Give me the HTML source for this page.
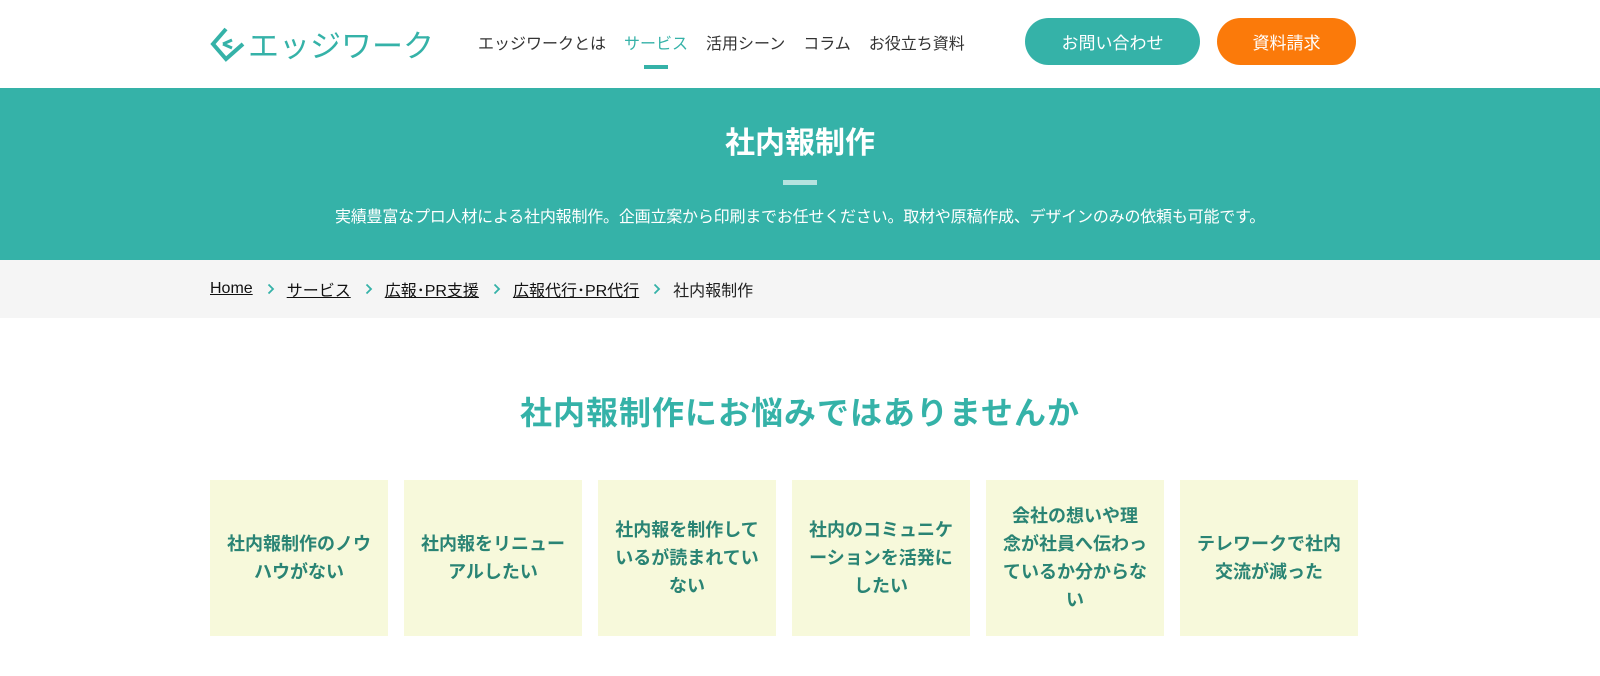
<!DOCTYPE html>
<html><head><meta charset="utf-8"><style>
*{margin:0;padding:0;box-sizing:border-box}
body{width:1600px;height:676px;overflow:hidden;background:#fff;font-family:"Liberation Sans","Noto Sans CJK JP",sans-serif;color:#333}
header{height:88px;position:relative}
.logo{position:absolute;left:210px;top:21px;display:flex;align-items:center;color:#35b2a8;font-size:31px}
nav{position:absolute;left:478px;top:30px;font-size:16px;display:flex;gap:18px;color:#333}
nav span.on{color:#35b2a8;position:relative}
nav span.on:after{content:"";position:absolute;left:20px;top:35px;width:24px;height:4px;background:#35b2a8}
.btn{position:absolute;top:18px;height:47px;border-radius:24px;color:#fff;font-size:17px;display:flex;align-items:center;justify-content:center}
.hero{background:#35b2a8;height:172px;color:#fff;text-align:center;position:relative}
.hero h1{font-size:30px;padding-top:36px;font-weight:bold;line-height:40px}
.hero .bar{width:34px;height:5px;background:#b5e3df;margin:16px auto 0}
.hero p{font-size:16px;margin-top:18px;letter-spacing:-0.2px}
.bc{background:#f5f5f5;height:58px;font-size:16px;display:flex;align-items:center;padding-left:210px;color:#222}
.bc a{color:#111;text-decoration:underline}
.bc svg{margin:0 12px 0 14px}
h2{text-align:center;color:#35b2a8;font-size:32px;margin-top:70px;font-weight:bold;letter-spacing:1px}
.cards{position:absolute;top:480px;left:210px;display:flex;gap:16px}
.card{width:178px;height:156px;background:#f7f9db;color:#2a8474;font-weight:bold;font-size:18px;line-height:28px;display:flex;align-items:center;justify-content:center;text-align:center;white-space:nowrap}
</style></head><body>
<header>
<div class="logo"><svg width="36" height="36" viewBox="0 0 36 36" fill="none" stroke="#35b2a8" stroke-width="4"><path d="M16 3 L3 18 L16 33 L33 18"/><path d="M13 18 L22 14 M13 18 L22 22" stroke-width="3"/></svg><span style="margin-left:2px">エッジワーク</span></div>
<nav><span>エッジワークとは</span><span class="on">サービス</span><span>活用シーン</span><span>コラム</span><span>お役立ち資料</span></nav>
<div class="btn" style="left:1025px;width:175px;background:#35b2a8">お問い合わせ</div>
<div class="btn" style="left:1217px;width:139px;background:#fb7a0a">資料請求</div>
</header>
<div class="hero"><h1>社内報制作</h1><div class="bar"></div><p>実績豊富なプロ人材による社内報制作。企画立案から印刷までお任せください。取材や原稿作成、デザインのみの依頼も可能です。</p></div>
<div class="bc"><a>Home</a><svg width="8" height="12" viewBox="0 0 8 12"><path d="M1.5 1.5L6 6L1.5 10.5" fill="none" stroke="#35b2a8" stroke-width="1.8"/></svg><a>サービス</a><svg width="8" height="12" viewBox="0 0 8 12"><path d="M1.5 1.5L6 6L1.5 10.5" fill="none" stroke="#35b2a8" stroke-width="1.8"/></svg><a>広報･PR支援</a><svg width="8" height="12" viewBox="0 0 8 12"><path d="M1.5 1.5L6 6L1.5 10.5" fill="none" stroke="#35b2a8" stroke-width="1.8"/></svg><a>広報代行･PR代行</a><svg width="8" height="12" viewBox="0 0 8 12"><path d="M1.5 1.5L6 6L1.5 10.5" fill="none" stroke="#35b2a8" stroke-width="1.8"/></svg><span>社内報制作</span></div>
<h2>社内報制作にお悩みではありませんか</h2>
<div class="cards">
<div class="card">社内報制作のノウ<br>ハウがない</div>
<div class="card">社内報をリニュー<br>アルしたい</div>
<div class="card">社内報を制作して<br>いるが読まれてい<br>ない</div>
<div class="card">社内のコミュニケ<br>ーションを活発に<br>したい</div>
<div class="card">会社の想いや理<br>念が社員へ伝わっ<br>ているか分からな<br>い</div>
<div class="card">テレワークで社内<br>交流が減った</div>
</div>
</body></html>
